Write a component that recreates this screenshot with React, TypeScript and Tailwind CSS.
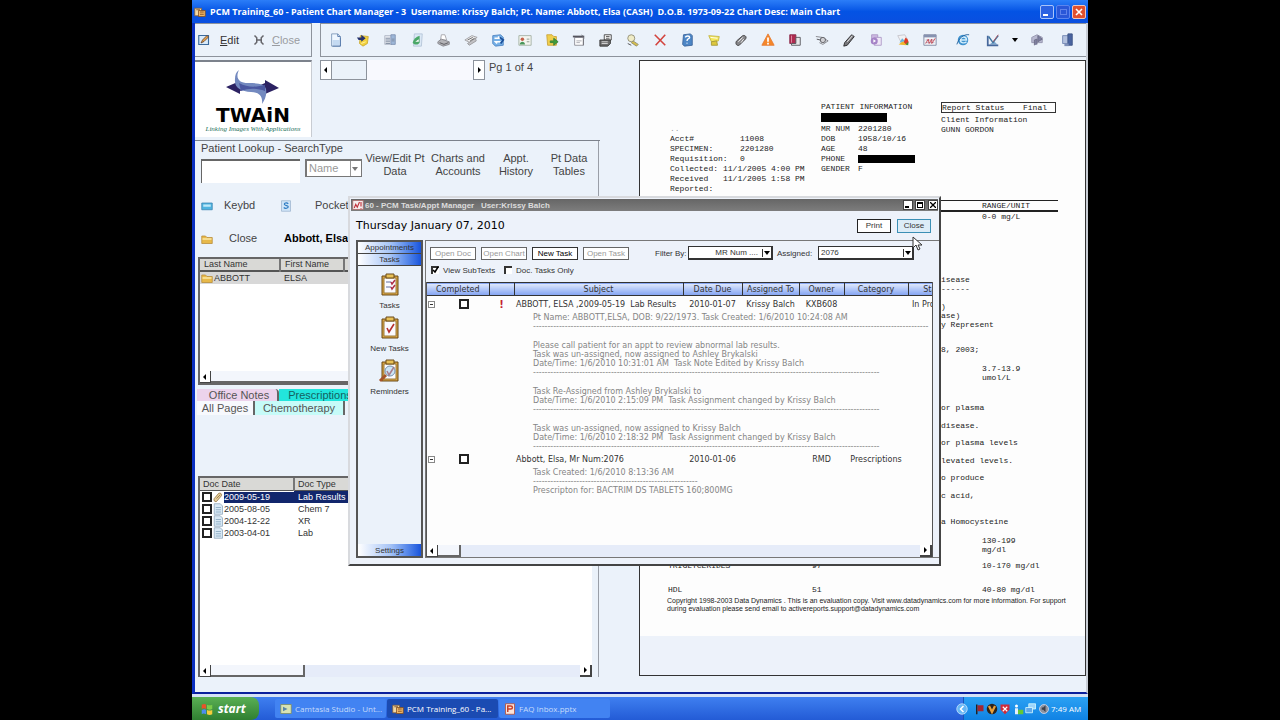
import type { ReactNode } from "react";
import clsx from "clsx";

const sans = "font-['Liberation_Sans',Arial,sans-serif]";
const verdana = "font-['DejaVu_Sans',Verdana,sans-serif]";
const mono = "font-['Liberation_Mono','Courier_New',monospace]";
const tahoma = "font-['Open_Sans',Tahoma,sans-serif]";

function Icon({ children, size = 14 }: { children: ReactNode; size?: number }) {
  return (
    <svg width={size} height={size} viewBox="0 0 16 16" className="shrink-0" aria-hidden="true">
      {children}
    </svg>
  );
}

const toolbar: { name: string; icon: ReactNode }[] = [
  {
    name: "New page",
    icon: (
      <>
        <path d="M3 1h7l3 3v11H3z" fill="#eef6ff" stroke="#7d97b8" />
        <path d="M4 8h8v6H4z" fill="#c4daf2" />
        <path d="M10 1v3h3M13 5v10H4" fill="none" stroke="#4f74a8" />
      </>
    ),
  },
  {
    name: "Send note",
    icon: (
      <>
        <path d="M5 3l9 1-1 8-5 3-4-3z" fill="#f2d13c" stroke="#c9aa34" />
        <path d="M1 5h5V2l5 4-5 4V8H3z" fill="#26326e" />
        <path d="M6 12l5-2" stroke="#fff4b0" />
      </>
    ),
  },
  {
    name: "Scan",
    icon: (
      <>
        <path d="M2 3h8v10H2z" fill="#e4e8ef" stroke="#b0b8c6" />
        <path d="M9 2h5v11H9z" fill="#9db7d8" stroke="#7f92b2" />
        <path d="M3 6h5M3 8h5M3 10h5M3 12h5M10 7h3M10 9h3" stroke="#7d899d" />
      </>
    ),
  },
  {
    name: "Refresh page",
    icon: (
      <>
        <path d="M5 1h9l-1 14H4z" fill="#dbe8f5" stroke="#b5c5d8" />
        <path d="M3 11c1-4 4-7 8-8v8c-2 3-6 3-8 0z" fill="#4aa868" />
        <path d="M6 10l4-3v3z" fill="#fff" />
      </>
    ),
  },
  {
    name: "Print",
    icon: (
      <>
        <path d="M5 2l4 0 2 6H4z" fill="#fff" stroke="#a2a2a8" />
        <path d="M1 10l4-3 9 3v3l-7 2-6-3z" fill="#b4b4b8" stroke="#85858b" />
        <path d="M3 11l5 2 5-2" fill="none" stroke="#525258" />
      </>
    ),
  },
  {
    name: "Print pages",
    icon: (
      <>
        <path d="M1 8l8-5 6 2-8 6z" fill="#ededee" stroke="#9b9b9f" />
        <path d="M4 12l9-6 1 3-8 5z" fill="#c2c2c5" stroke="#98989c" />
        <path d="M4 8l6-3M7 9l5-3" stroke="#666" />
      </>
    ),
  },
  {
    name: "Sync folder",
    icon: (
      <>
        <path d="M2 3l9-1 3 3v9l-9 1-3-3z" fill="#76b0e6" stroke="#4f86c4" />
        <path d="M4 6h6l-2-2M11 10H5l2 2" fill="none" stroke="#fff" strokeWidth="1.6" />
        <path d="M10 5l4 3-3 4" fill="none" stroke="#1a4f9a" strokeWidth="2" />
      </>
    ),
  },
  {
    name: "Patient card",
    icon: (
      <>
        <path d="M1 3h14v11H1z" fill="#f4f5ef" stroke="#a2b0a2" />
        <circle cx="5" cy="7" r="2" fill="#c4604a" />
        <path d="M2 13c0-4 6-4 6 0z" fill="#49965a" />
        <path d="M10 7h3M10 10h3" stroke="#879587" />
      </>
    ),
  },
  {
    name: "Export folder",
    icon: (
      <>
        <path d="M2 2h6l2 2h3v10H3z" fill="#f1cf4c" stroke="#c9a33a" />
        <path d="M6 9h4V6l5 4-5 4v-3H6z" fill="#3f9e3a" stroke="#3b7f38" />
      </>
    ),
  },
  {
    name: "Schedule",
    icon: (
      <>
        <path d="M3 5h10v9H3z" fill="#fff" stroke="#8a8a92" />
        <path d="M1 4h13" stroke="#55555e" strokeWidth="2" />
        <path d="M5 9h6M5 11h4" stroke="#a3a3ab" />
        <path d="M11 2l3 4M13 6v8" stroke="#6c6c74" />
      </>
    ),
  },
  {
    name: "Fax",
    icon: (
      <>
        <path d="M6 2h8v6H6z" fill="#f3f3f3" stroke="#444" />
        <path d="M1 8h12v4l-3 3H1z" fill="#6d6d6d" stroke="#333" />
        <path d="M3 10h7M3 12h7" stroke="#ddd" />
        <path d="M8 4h4M8 6h4" stroke="#555" />
      </>
    ),
  },
  {
    name: "Settings",
    icon: (
      <>
        <circle cx="6" cy="6" r="4" fill="#f0ecc6" stroke="#8f8b72" />
        <path d="M8 9l6 4-2 2-6-4z" fill="#d6bf4b" stroke="#8f8b72" />
        <path d="M2 12l4 2" stroke="#444" />
      </>
    ),
  },
  {
    name: "Delete",
    icon: <path d="M2 2l12 12M14 2L3 14" stroke="#d3443e" strokeWidth="1.8" />,
  },
  {
    name: "Help book",
    icon: (
      <>
        <path d="M4 2l8-1 2 2v11l-9 1-2-2z" fill="#4c86c6" stroke="#3b659c" />
        <path d="M6 5c1-2 5-2 5 0s-3 1-3 4m0 2v1" fill="none" stroke="#fff" strokeWidth="1.6" />
      </>
    ),
  },
  {
    name: "Award",
    icon: (
      <>
        <path d="M2 3l12 1-1 5-8 1z" fill="#f3e75a" stroke="#c4b645" />
        <path d="M5 10l6-1 1 5H5z" fill="#ddc73d" stroke="#a39738" />
        <path d="M4 5l8 1" stroke="#fff" />
      </>
    ),
  },
  {
    name: "Attachment",
    icon: (
      <>
        <path d="M3 9l7-6c3-1 5 2 3 4l-7 7c-3 1-5-2-3-5z" fill="#87878a" stroke="#3a3a3c" />
        <path d="M5 10l5-5M8 11l3-4" stroke="#fff" />
      </>
    ),
  },
  {
    name: "Alert",
    icon: (
      <>
        <path d="M8 1l7 13H1z" fill="#f5872a" stroke="#e67d35" />
        <path d="M8 5v5M8 11v2" stroke="#fff" strokeWidth="2" />
      </>
    ),
  },
  {
    name: "Address book",
    icon: (
      <>
        <path d="M2 2h7v10H2z" fill="#b02b50" stroke="#8a2a48" />
        <path d="M9 5h5v9H4v-2h5z" fill="#e8e8ea" stroke="#55555a" />
        <path d="M4 3v8" stroke="#e292a8" />
      </>
    ),
  },
  {
    name: "View",
    icon: (
      <>
        <path d="M1 4l7 1 7 4-6 4-4-2" fill="none" stroke="#7d7d82" />
        <circle cx="9" cy="8" r="3" fill="#d0d0d4" stroke="#57575c" />
        <path d="M2 7l4 1" stroke="#47474c" />
      </>
    ),
  },
  {
    name: "Sign",
    icon: (
      <>
        <path d="M3 11l8-9 3 2-8 10-4 1z" fill="#77777b" stroke="#262628" />
        <path d="M6 10l6-7" stroke="#fff" />
      </>
    ),
  },
  {
    name: "Copy pages",
    icon: (
      <>
        <path d="M3 2h7v9H3z" fill="#cdb9e2" stroke="#ab97c6" />
        <path d="M6 5h8v9H6z" fill="#efe7f7" stroke="#ab97c6" />
        <circle cx="6" cy="9" r="4" fill="#a583c7" />
        <path d="M5 7l3 2-3 2z" fill="#fff" />
      </>
    ),
  },
  {
    name: "Image tools",
    icon: (
      <>
        <path d="M2 3l8-1 3 5-6 6z" fill="#f1f1f3" stroke="#c3c3ca" />
        <path d="M11 5a6 6 0 012 9l-5-3z" fill="#db3b27" />
        <path d="M3 13l5-4 4 5z" fill="#f0b62b" />
        <path d="M4 11l3-5 3 3z" fill="#66b3dc" />
        <path d="M11 13l3-3v4z" fill="#3b9a40" />
      </>
    ),
  },
  {
    name: "Calendar",
    icon: (
      <>
        <path d="M1 2h14v12H1z" fill="#f5f5f8" stroke="#7c86a0" />
        <path d="M1 2h14v3H1z" fill="#8692b0" />
        <path d="M3 8h10M3 11h10" stroke="#a9afc2" />
        <path d="M3 12l3-5 1 5 3-5v5l4-6" fill="none" stroke="#c64350" />
      </>
    ),
  },
];

const toolbarEnd: { name: string; icon: ReactNode }[] = [
  {
    name: "Browser",
    icon: (
      <>
        <circle cx="8" cy="8" r="6" fill="#3f93cf" />
        <path d="M5 8h7c0-4-6-5-7 0 0 4 5 4 7 2" fill="none" stroke="#d4eefc" strokeWidth="1.6" />
        <path d="M1 13C3 6 9 1 15 2" fill="none" stroke="#1c5a98" />
      </>
    ),
  },
  {
    name: "Chart",
    icon: (
      <>
        <path d="M4 13h9l-4-4z" fill="#7fa9cf" />
        <path d="M2 3v11h12" fill="none" stroke="#46689c" strokeWidth="2" />
        <path d="M3 4l5 7 6-8" fill="none" stroke="#3e76a0" strokeWidth="1.6" />
        <path d="M8 10l6-8" stroke="#b34c53" />
      </>
    ),
  },
];

const subTextOne = [
  "Pt Name: ABBOTT,ELSA, DOB: 9/22/1973. Task Created: 1/6/2010 10:24:08 AM",
  "-".repeat(137),
  "",
  "Please call patient for an appt to review abnormal lab results.",
  "Task was un-assigned, now assigned to Ashley Brykalski",
  "Date/Time: 1/6/2010 10:31:01 AM  Task Note Edited by Krissy Balch",
  "-".repeat(120),
  "",
  "Task Re-Assigned from Ashley Brykalski to",
  "Date/Time: 1/6/2010 2:15:09 PM  Task Assignment changed by Krissy Balch",
  "-".repeat(120),
  "",
  "Task was un-assigned, now assigned to Krissy Balch",
  "Date/Time: 1/6/2010 2:18:32 PM  Task Assignment changed by Krissy Balch",
  "-".repeat(120),
];

const subTextTwo = [
  "Task Created: 1/6/2010 8:13:36 AM",
  "-".repeat(57),
  "Prescripton for: BACTRIM DS TABLETS 160;800MG",
];

const docs = [
  { date: "2009-05-19", type: "Lab Results", selected: true },
  { date: "2005-08-05", type: "Chem 7", selected: false },
  { date: "2004-12-22", type: "XR", selected: false },
  { date: "2003-04-01", type: "Lab", selected: false },
];

interface ReportLine {
  gap: string;
  prose?: string;
  name?: string;
  value?: string;
  range?: string;
}

const reportLines: ReportLine[] = [
  { gap: "pt-0", range: "0-0 mg/L" },
  { gap: "pt-[54px]", prose: "isease" },
  { gap: "pt-0", prose: "------" },
  { gap: "pt-[9px]", prose: ")" },
  { gap: "pt-0", prose: "ase)" },
  { gap: "pt-0", prose: "y Represent" },
  { gap: "pt-[16px]", prose: "8, 2003;" },
  { gap: "pt-[10px]", range: "3.7-13.9" },
  { gap: "pt-0", range: "umol/L" },
  { gap: "pt-[21px]", prose: "or plasma" },
  { gap: "pt-[9px]", prose: "disease." },
  { gap: "pt-[8px]", prose: "or plasma levels" },
  { gap: "pt-[9px]", prose: "levated levels." },
  { gap: "pt-[8px]", prose: "o produce" },
  { gap: "pt-[9px]", prose: "c acid," },
  { gap: "pt-[17px]", prose: "a Homocysteine" },
  { gap: "pt-[10px]", range: "130-199" },
  { gap: "pt-0", range: "mg/dl" },
  { gap: "pt-[7px]", name: "TRIGLYCERIDES", value: "97", range: "10-170 mg/dl" },
  { gap: "pt-[15px]", name: "HDL", value: "51", range: "40-80 mg/dl" },
];

function Arrow({ dir }: { dir: "left" | "right" | "down" }) {
  const d = { left: "M5 1v6L2 4z", right: "M3 1v6l3-3z", down: "M1 2h6L4 6z" }[dir];
  return (
    <svg width="8" height="8" viewBox="0 0 8 8" className="shrink-0" aria-hidden="true">
      <path d={d} fill="currentColor" />
    </svg>
  );
}

function HScroll({ thumb, className }: { thumb: string; className?: string }) {
  return (
    <div className={clsx("flex h-[12px] bg-[#e6ecf9] text-black", className)}>
      <button aria-label="Scroll left" className="flex w-[11px] items-center justify-center border-r border-b border-[#444] bg-white">
        <Arrow dir="left" />
      </button>
      <div className={clsx("border-r-2 border-b-2 border-[#666] bg-[#f3f6fc]", thumb)} />
      <div className="flex-1" />
      <button aria-label="Scroll right" className="flex w-[12px] items-center justify-center border-r-2 border-b-2 border-[#444] bg-white">
        <Arrow dir="right" />
      </button>
    </div>
  );
}

function ToolButton({ name, icon, wide }: { name: string; icon: ReactNode; wide?: boolean }) {
  return (
    <button aria-label={name} className={clsx("flex justify-center", wide ? "w-[30px]" : "w-[27px]")}>
      <Icon>{icon}</Icon>
    </button>
  );
}

function TitleBar() {
  return (
    <header className="flex h-[23px] items-center gap-1 bg-gradient-to-b from-[#2b7df8] via-[#0453e4] to-[#0a4fe0] pl-[2px] pr-[2px] text-white">
      <Icon size={12}>
        <path d="M1 3h9v10H1z" fill="#f2d9a4" stroke="#8a5d2c" />
        <path d="M6 6h9v8H6z" fill="#efb665" stroke="#7c4a1c" />
        <path d="M8 8h5M8 11h5M3 5h5" stroke="#6d3b17" />
      </Icon>
      <h1 className={clsx(tahoma, "flex-1 truncate whitespace-pre text-[9px] leading-[14px] font-bold")}>
        PCM Training_60 - Patient Chart Manager - 3  Username: Krissy Balch; Pt. Name: Abbott, Elsa (CASH)  D.O.B. 1973-09-22 Chart Desc: Main Chart
      </h1>
      <div className="flex gap-[2px]">
        <button aria-label="Minimize" className="flex h-[14px] w-[14px] items-end rounded-xs border border-[#a9c4fa] bg-[#2b62e2] p-[2px]">
          <span className="h-[2px] w-[5px] bg-white" />
        </button>
        <button aria-label="Restore" className="flex h-[14px] w-[14px] items-center justify-center rounded-xs border border-[#5b84ee] bg-[#2a57d8]">
          <span className="h-[6px] w-[7px] border border-[#5f82ea]" />
        </button>
        <button aria-label="Close window" className="flex h-[14px] w-[14px] items-center justify-center rounded-xs border border-[#f1c4b8] bg-[#e0502e]">
          <svg width="8" height="8" viewBox="0 0 8 8">
            <path d="M1 1l6 6M7 1L1 7" stroke="#fff" strokeWidth="1.6" />
          </svg>
        </button>
      </div>
    </header>
  );
}

function Toolbars() {
  return (
    <div className="flex gap-2">
      <div className="flex h-[34px] w-[117px] shrink-0 items-center border border-l-0 border-[#8d939c] pl-[3px] text-[11px]">
        <button className="flex items-center gap-[10px] text-[#333]">
          <Icon size={12}>
            <path d="M1 2h13v12H1z" fill="#d9ebfb" stroke="#3d6b9c" strokeWidth="1.5" />
            <path d="M4 12l2-4 6-6 2 2-6 6z" fill="#e9a24b" stroke="#56382a" />
          </Icon>
          <span>
            <u>E</u>dit
          </span>
        </button>
        <button className="ml-[14px] flex items-center gap-[7px] text-[#9a9ca1]">
          <Icon size={12}>
            <path d="M2 2l3 3v6l-3 3M14 2l-3 3v6l3 3M5 8h6" fill="none" stroke="#66666b" strokeWidth="2" />
          </Icon>
          <span>
            <u>C</u>lose
          </span>
        </button>
      </div>
      <div className="flex h-[34px] min-w-0 flex-1 items-center border border-r-0 border-[#8d939c] pl-[1px] text-black">
        {toolbar.map((t) => (
          <ToolButton key={t.name} {...t} />
        ))}
        <div className="ml-[5px] flex items-center">
          {toolbarEnd.map((t) => (
            <ToolButton key={t.name} {...t} wide />
          ))}
          <button aria-label="More" className="flex w-[14px] justify-center">
            <Arrow dir="down" />
          </button>
          <ToolButton
            name="Send"
            wide
            icon={
              <>
                <path d="M2 5l6-3 6 3v6H2z" fill="#b8b9d0" stroke="#9394ab" />
                <path d="M5 14V8l3-1v6M9 3l5 4-5 3z" fill="#7f80a0" stroke="#6c6d86" />
              </>
            }
          />
          <ToolButton
            name="Exit"
            wide
            icon={
              <>
                <path d="M3 3h7v9H3z" fill="#b3c1de" stroke="#7186b2" />
                <path d="M9 1h5v13H9z" fill="#4a64a0" stroke="#3b5285" />
                <path d="M5 12h5v3H5z" fill="#7d8fb8" />
              </>
            }
          />
        </div>
      </div>
    </div>
  );
}

function Logo() {
  return (
    <div className="flex h-[77px] w-[117px] shrink-0 flex-col items-center border-t-2 border-r border-[#7c828c] border-r-[#c8ccd2] bg-white pt-2">
      <svg width="56" height="35" viewBox="0 0 56 35" className="shrink-0" aria-hidden="true">
        <path d="M1 17l14-6v3c9 4 17 3 25-1v-3l14 8-14 6v-4c-9-3-16-3-25 1v3z" fill="#2c2262" />
        <path d="M14 0c-4 8 0 13 9 13 10 0 17 1 18 6 1 6-1 11-4 15 1-8-3-12-11-12-10-1-17-4-16-13 0-4 1-7 4-9z" fill="#7389bf" />
        <path d="M14 13c9 5 18 4 26 2v6c-9-3-16-3-24 0z" fill="#4a57a0" />
      </svg>
      <p className={clsx(verdana, "text-[20px] leading-[20px] font-bold text-black")}>TWAiN</p>
      <p className="font-['Liberation_Serif',serif] text-[7px] leading-[8px] italic text-[#24705c]">
        Linking Images With Applications
      </p>
    </div>
  );
}

function PatientLookup() {
  return (
    <div className="flex h-[54px] pl-[6px] text-[11px] leading-[13px] text-[#444]">
      <div>
        <label htmlFor="lookup" className="block pt-[1px]">
          Patient Lookup - SearchType
        </label>
        <div className="mt-1 flex gap-[5px]">
          <input id="lookup" className="h-[24px] w-[99px] border-t-2 border-l border-[#666] bg-white px-1" />
          <div className="flex h-[18px] w-[57px] items-center border-2 border-r border-b border-[#777] bg-white">
            <select aria-label="Search type" className="h-full min-w-0 flex-1 appearance-none bg-white pl-[2px] text-[#999] outline-none">
              <option>Name</option>
            </select>
            <span className="flex h-full w-[11px] items-center border-l border-[#999] text-[#777]">
              <Arrow dir="down" />
            </span>
          </div>
        </div>
      </div>
      <div className="flex items-start pt-[11px] text-center">
        <button className="w-[66px]">View/Edit Pt Data</button>
        <button className="w-[60px]">Charts and Accounts</button>
        <button className="w-[56px] px-2">Appt. History</button>
        <button className="w-[50px]">Pt Data Tables</button>
      </div>
    </div>
  );
}

function FolderIcon() {
  return (
    <Icon size={12}>
      <path d="M1 4h5l2 2h7v8H1z" fill="#e7b94a" stroke="#b58a36" />
      <path d="M2 7h12v2H2z" fill="#fbe9a6" />
    </Icon>
  );
}

function LeftPane() {
  return (
    <section className="flex w-[405px] shrink-0 flex-col">
      <div className="flex gap-2">
        <Logo />
        <div className="flex h-[20px] w-[165px] text-black">
          <button aria-label="Previous page" className="flex w-[12px] items-center justify-center border border-[#8d939c] bg-white">
            <Arrow dir="left" />
          </button>
          <div className="w-[35px] border border-l-0 border-[#8d939c] bg-[#ebf2fa]" />
          <div className="flex-1 bg-[#f8f9fe]" />
          <button aria-label="Next page" className="flex w-[12px] items-center justify-center border border-[#8d939c] bg-white">
            <Arrow dir="right" />
          </button>
        </div>
        <p className="-ml-1 pt-[1px] text-[11px] leading-[13px] text-[#444]">Pg 1 of 4</p>
      </div>

      <div className="mt-[3px] mb-[15px] flex flex-1 flex-col border-t border-[#7c828c]">
        <div className="flex w-[404px] flex-1 flex-col border-r border-[#9a9fa8]">
          <PatientLookup />
          <div className="grid grid-cols-[23px_56px_35px_1fr] items-center pt-1 pl-[6px] text-[11px] leading-[13px] text-[#444]">
            <Icon size={12}>
              <path d="M1 4h14v9H1z" fill="#4fb4e0" stroke="#3a80ad" />
              <path d="M3 6h10v3H3z" fill="#bfe8f8" />
            </Icon>
            <button className="text-left">Keybd</button>
            <Icon size={12}>
              <path d="M2 1h12v14H2z" fill="#cfe5f8" stroke="#9cb4ce" />
              <path d="M11 5c-2-2-6-1-5 1s5 1 5 3-4 3-6 1" fill="none" stroke="#2b7ac2" strokeWidth="1.5" />
            </Icon>
            <button className="text-left">Pocket</button>
          </div>
          <div className="flex items-center pt-[20px] pb-3 pl-[6px] text-[11px] leading-[13px] text-[#444]">
            <FolderIcon />
            <button className="ml-4 w-[55px] text-left">Close</button>
            <strong className="text-black">Abbott, Elsa</strong>
          </div>

          <div className="mx-[3px] flex h-[128px] flex-col border-2 border-r border-[#666] bg-white text-[9px] leading-[11px] text-[#333]">
            <table className="w-full table-fixed border-collapse">
              <thead>
                <tr className="border-b-2 border-[#555] bg-[#d9d9d6] text-left">
                  <th className="w-[80px] border-r-2 border-[#777] py-0 pl-1 font-normal">Last Name</th>
                  <th className="w-[64px] border-r-2 border-[#777] py-0 pl-1 font-normal">First Name</th>
                  <th />
                </tr>
              </thead>
              <tbody>
                <tr className="bg-[#d8d8d8]">
                  <td className="p-0">
                    <div className="flex items-center gap-[1px] pl-[1px]">
                      <FolderIcon />
                      ABBOTT
                    </div>
                  </td>
                  <td className="p-0 pl-1">ELSA</td>
                  <td />
                </tr>
              </tbody>
            </table>
            <div className="flex-1" />
            <HScroll thumb="w-[200px]" />
          </div>

          <div className="mt-1 pl-[2px] text-[11px] leading-[13px] text-[#555]">
            <div className="flex h-[12px] items-start overflow-hidden">
              <button className="h-full w-[82px] rounded-tr-sm border-r-2 border-[#666] bg-[#ecd3ec] pl-1">Office Notes</button>
              <button className="h-full w-[82px] bg-[#22e5dc] text-[#14615f]">Prescriptions</button>
            </div>
            <div className="flex h-[14px]">
              <button className="w-[58px] border-r-2 border-[#666] bg-[#f7f9fd]">All Pages</button>
              <button className="w-[90px] border-r-2 border-[#666] bg-[#c6fbf8]">Chemotherapy</button>
            </div>
          </div>

          <div className="mt-[61px] mr-[6px] ml-[3px] flex flex-1 flex-col border-t-2 border-l-2 border-[#666] bg-white text-[9px] leading-[11px] text-[#333]">
            <table className="w-full table-fixed border-collapse">
              <thead>
                <tr className="border-b border-[#555] bg-[#d9d9d6] text-left">
                  <th className="w-[94px] border-r-2 border-[#777] pt-[1px] pb-0 pl-[3px] font-normal">Doc Date</th>
                  <th className="pt-[1px] pb-0 pl-[3px] font-normal">Doc Type</th>
                </tr>
              </thead>
              <tbody>
                {docs.map((d) => (
                  <tr key={d.date} className="h-[12px]">
                    <td className="p-0">
                      <label className="flex items-center">
                        <input type="checkbox" className="ml-[2px] h-[10px] w-[10px] appearance-none border-2 border-[#222] bg-white" />
                        <Icon size={12}>
                          {d.selected ? (
                            <path d="M3 10l6-7c3-1 5 2 3 4l-6 7c-3 1-4-2-3-4zm3 0l5-5" fill="#e6cf9c" stroke="#8c6a35" />
                          ) : (
                            <>
                              <path d="M3 1h8l3 3v11H3z" fill="#d9e9f5" stroke="#8ba3b8" />
                              <path d="M5 6h7M5 9h7M5 12h7" stroke="#7fa0ba" />
                            </>
                          )}
                        </Icon>
                        <span className={clsx("flex-1", d.selected && "bg-[#11266c] text-white")}>{d.date}</span>
                      </label>
                    </td>
                    <td className={clsx("p-0 pl-1", d.selected && "bg-[#11266c] text-white")}>{d.type}</td>
                  </tr>
                ))}
              </tbody>
            </table>
            <div className="flex-1" />
            <HScroll thumb="w-[94px]" />
          </div>
        </div>
      </div>
    </section>
  );
}

function Report() {
  return (
    <section className={clsx(mono, "mb-4 ml-auto min-w-0 max-w-[447px] flex-1 border border-[#333] bg-[#edf2fa] text-[8px] leading-[10px] text-[#222]")}>
      <div className="h-[575px] bg-[#fdfdfd]">
        <div className="grid grid-cols-[151px_120px_1fr] pt-[41px] pl-[30px] whitespace-pre">
          <div className="grid grid-cols-[70px_1fr] content-start pt-[22px]">
            <span className="text-[#999]">..</span>
            <span />
            <span>Acct#</span>
            <span>11008</span>
            <span>SPECIMEN:</span>
            <span>2201280</span>
            <span>Requisition:</span>
            <span>0</span>
            <span className="col-span-2 grid grid-cols-[53px_1fr]">
              <span>Collected:</span>
              <span>11/1/2005 4:00 PM</span>
              <span>Received</span>
              <span>11/1/2005 1:58 PM</span>
              <span>Reported:</span>
            </span>
          </div>
          <div>
            <p>PATIENT INFORMATION</p>
            <div className="mt-[1px] mb-[2px] h-[9px] w-[66px] bg-black" />
            <dl className="grid grid-cols-[37px_1fr]">
              <dt>MR NUM</dt>
              <dd>2201280</dd>
              <dt>DOB</dt>
              <dd>1958/10/16</dd>
              <dt>AGE</dt>
              <dd>48</dd>
              <dt>PHONE</dt>
              <dd className="mt-[1px] h-[8px] w-[57px] bg-black" />
              <dt>GENDER</dt>
              <dd>F</dd>
            </dl>
          </div>
          <div>
            <p className="flex w-[115px] justify-between border border-[#333] pr-2 leading-[9px]">
              <span>Report Status</span>
              <span>Final</span>
            </p>
            <p className="mt-[1px] pt-[1px]">Client Information</p>
            <p>GUNN GORDON</p>
          </div>
        </div>

        <table className="mt-[6px] ml-[28px] w-[390px] table-fixed border-collapse leading-[9px]">
          <thead>
            <tr className="border-t border-b-2 border-[#222] text-left">
              <th className="w-[144px] p-0" />
              <th className="w-[170px] p-0" />
              <th className="p-0 font-normal">RANGE/UNIT</th>
            </tr>
          </thead>
          <tbody>
            {reportLines.map((l, i) =>
              l.prose ? (
                <tr key={i}>
                  <td colSpan={3} className={clsx("p-0 pl-[273px] whitespace-pre", l.gap)}>
                    {l.prose}
                  </td>
                </tr>
              ) : (
                <tr key={i}>
                  <td className={clsx("p-0", l.gap)}>{l.name}</td>
                  <td className={clsx("p-0", l.gap)}>{l.value}</td>
                  <td className={clsx("p-0", l.gap)}>{l.range}</td>
                </tr>
              )
            )}
          </tbody>
        </table>
        <p className={clsx(sans, "pt-[3px] pl-[27px] text-[7px] leading-[8px] whitespace-nowrap")}>
          Copyright 1998-2003 Data Dynamics . This is an evaluation copy. Visit www.datadynamics.com for more information. For support
          <br />
          during evaluation please send email to activereports.support@datadynamics.com
        </p>
      </div>
    </section>
  );
}

function Clipboard({ lens, list }: { lens?: boolean; list?: boolean }) {
  return (
    <svg width="24" height="24" viewBox="0 0 24 24" aria-hidden="true">
      <path d="M4 3h16v19H4z" fill="#d9a441" stroke="#6b4a19" />
      <path d="M6 5h12v15H6z" fill="#fbfbff" stroke="#9a7a3c" />
      <path d="M8 1h8v4H8z" fill="#e8c158" stroke="#6b4a19" />
      {list ? (
        <>
          <path d="M8 9h5M8 14h5" stroke="#6370a0" />
          <path d="M13 9l1 2 3-4M13 14l1 2 3-4" fill="none" stroke="#b03048" strokeWidth="1.5" />
        </>
      ) : (
        <path d="M9 12l2 4 5-8" fill="none" stroke="#b5302f" strokeWidth="1.6" />
      )}
      {lens && (
        <>
          <circle cx="12" cy="12" r="5" fill="#9fd0ee" fillOpacity="0.5" stroke="#7792ad" />
          <path d="M8 16l-6 6" stroke="#a5552b" strokeWidth="3" />
        </>
      )}
    </svg>
  );
}

function NavItem({ label, children }: { label: string; children: ReactNode }) {
  return (
    <button className="flex h-[43px] flex-col items-center gap-[3px]">
      {children}
      <span>{label}</span>
    </button>
  );
}

const navBar = "h-[12px] bg-gradient-to-r from-white via-[#a9c6f6] to-[#1853dc]";

function Expander() {
  return (
    <button aria-label="Collapse" className="flex h-[7px] w-[7px] items-center justify-center border border-[#888] bg-white">
      <span className="h-px w-[3px] bg-[#333]" />
    </button>
  );
}

function SubText({ lines }: { lines: string[] }) {
  return (
    <tr className="text-[#858585]">
      <td colSpan={2} />
      <td colSpan={6} className="p-0 pl-[19px] leading-[9px] whitespace-pre">
        {lines.map((l, i) => (
          <div key={i} className={l ? "h-[9px]" : "h-[10px]"}>
            {l}
          </div>
        ))}
      </td>
    </tr>
  );
}

function TaskRow(props: { subject: string; due: string; assigned?: string; owner: string; category?: string; status?: string; urgent?: boolean }) {
  return (
    <tr className="h-[17px] text-[#333]">
      <td className="p-0 pl-[1px]">
        <div className="flex items-center gap-[24px]">
          <Expander />
          <input type="checkbox" aria-label={props.subject} className="h-[10px] w-[10px] appearance-none border-2 border-[#222] bg-white" />
        </div>
      </td>
      <td className="p-0 text-center text-[10px] font-bold text-[#c3202f]">{props.urgent && "!"}</td>
      <td className="p-0 pl-[2px] whitespace-pre">{props.subject}</td>
      <td className="p-0 text-center">{props.due}</td>
      <td className="p-0 text-center">{props.assigned}</td>
      <td className="p-0 text-center">{props.owner}</td>
      <td className="p-0 text-center">{props.category}</td>
      <td className="overflow-hidden p-0 pl-1 whitespace-nowrap">{props.status}</td>
    </tr>
  );
}

const dialogButton = "h-[13px] w-[46px] border bg-white text-center leading-[11px]";

function TaskManager() {
  const th = "border-r border-[#333] p-0 text-center font-normal";
  return (
    <section className="absolute top-[196px] left-[156px] flex h-[370px] w-[593px] flex-col border-2 border-[#d8dade] border-r-[#444] border-b-[#444] bg-[#edf2fa] text-[8px] leading-[11px] text-[#333]">
      <header className="mx-[1px] mt-[1px] flex h-[12px] items-center gap-[1px] bg-gradient-to-b from-[#666] to-[#7d7d7d] pl-[1px]">
        <Icon size={12}>
          <path d="M1 2h14v12H1z" fill="#f6eded" stroke="#a66" />
          <path d="M3 12l2-5 2 4 3-7M12 4v6M12 12v1" fill="none" stroke="#c0303a" strokeWidth="1.5" />
        </Icon>
        <h2 className="flex-1 whitespace-pre font-bold text-[#dcdcdc]">
          60 - PCM Task/Appt Manager   User:Krissy Balch
        </h2>
        <button aria-label="Minimize dialog" className="flex h-[10px] w-[10px] items-end border border-[#444] bg-white p-px">
          <span className="h-[2px] w-1 bg-black" />
        </button>
        <button aria-label="Maximize dialog" className="ml-[1px] flex h-[10px] w-[10px] items-center justify-center border border-[#444] bg-white">
          <span className="h-[6px] w-[6px] border border-t-2 border-black" />
        </button>
        <button aria-label="Close dialog" className="ml-[2px] flex h-[10px] w-[10px] items-center justify-center border border-[#444] bg-white">
          <svg width="6" height="6" viewBox="0 0 6 6">
            <path d="M0 0l6 6M6 0L0 6" stroke="#000" strokeWidth="1.3" />
          </svg>
        </button>
      </header>

      <div className="flex h-[29px] items-center pr-2 pl-[6px]">
        <p className={clsx(verdana, "flex-1 text-[11px] leading-[14px] text-black")}>Thursday January 07, 2010</p>
        <button className="mr-[6px] h-[14px] w-[34px] border border-[#222] bg-white leading-[12px]">Print</button>
        <button className="h-[14px] w-[34px] border border-[#3b8fb5] bg-[#dcecf7] leading-[12px]">Close</button>
      </div>

      <div className="mb-[6px] ml-[6px] flex min-h-0 flex-1 gap-[2px]">
        <nav className="flex w-[67px] shrink-0 flex-col border-2 border-[#555] bg-[#ebf2fa]">
          <button className={clsx(navBar, "border-b border-[#444]")}>Appointments</button>
          <button className={clsx(navBar, "border-b border-[#444]")}>Tasks</button>
          <div className="flex flex-1 flex-col pt-[7px]">
            <NavItem label="Tasks">
              <Clipboard list />
            </NavItem>
            <NavItem label="New Tasks">
              <Clipboard />
            </NavItem>
            <NavItem label="Reminders">
              <Clipboard lens />
            </NavItem>
          </div>
          <button className={navBar}>Settings</button>
        </nav>

        <div className="flex min-w-0 flex-1 flex-col border-t border-b border-l border-[#777]">
          <div className="flex items-center pt-[5px] pl-1">
            <div className="flex gap-[5px] text-[#999]">
              <button className={clsx(dialogButton, "border-[#666]")}>Open Doc</button>
              <button className={clsx(dialogButton, "border-[#666]")}>Open Chart</button>
              <button className={clsx(dialogButton, "border-[#333] text-black")}>New Task</button>
              <button className={clsx(dialogButton, "border-[#666]")}>Open Task</button>
            </div>
            <label htmlFor="filter" className="ml-[26px] w-[33px]">
              Filter By:
            </label>
            <div className="flex h-[14px] w-[85px] items-center border border-r-2 border-b-2 border-[#333] bg-white">
              <select id="filter" className="min-w-0 flex-1 appearance-none bg-white pr-1 text-right outline-none">
                <option>MR Num ....</option>
              </select>
              <span className="border-l border-[#333] text-black">
                <Arrow dir="down" />
              </span>
            </div>
            <label htmlFor="assigned" className="ml-1 w-[41px]">
              Assigned:
            </label>
            <div className="flex h-[14px] w-[96px] items-center border border-r-2 border-b-2 border-[#333] bg-white">
              <select id="assigned" className="min-w-0 flex-1 appearance-none bg-white pl-[2px] outline-none">
                <option>2076</option>
              </select>
              <span className="border-l border-[#333] text-black">
                <Arrow dir="down" />
              </span>
            </div>
          </div>

          <div className="mb-[2px] flex h-5 items-center pl-[5px]">
            <label className="flex w-[73px] items-center gap-1">
              <span className="grid">
                <input type="checkbox" defaultChecked className="col-start-1 row-start-1 h-2 w-2 appearance-none border-t-2 border-l-2 border-[#333] bg-white" />
                <svg width="8" height="8" viewBox="0 0 8 8" className="pointer-events-none col-start-1 row-start-1">
                  <path d="M2 4l2 2 3-5" fill="none" stroke="#000" strokeWidth="1.5" />
                </svg>
              </span>
              View SubTexts
            </label>
            <label className="flex items-center gap-1">
              <input type="checkbox" className="h-2 w-2 appearance-none border-t-2 border-l-2 border-[#333] bg-white" />
              Doc. Tasks Only
            </label>
          </div>

          <div className={clsx(verdana, "mr-[6px] flex min-h-0 flex-1 flex-col border-r border-l border-[#555] bg-[#fdfdfd]")}>
            <div className="min-h-0 flex-1 overflow-hidden">
              <table className="w-[537px] table-fixed border-collapse">
                <thead>
                  <tr className="h-[13px] border-t border-b border-[#333] bg-gradient-to-b from-[#dfe8fc] to-[#86a5f2]">
                    <th className={clsx(th, "w-[62px]")}>Completed</th>
                    <th className={clsx(th, "w-[25px]")} />
                    <th className={clsx(th, "w-[169px]")}>Subject</th>
                    <th className={clsx(th, "w-[59px]")}>Date Due</th>
                    <th className={clsx(th, "w-[57px]")}>Assigned To</th>
                    <th className={clsx(th, "w-[45px]")}>Owner</th>
                    <th className={clsx(th, "w-[64px]")}>Category</th>
                    <th className={clsx(th, "w-[56px]")}>Status</th>
                  </tr>
                </thead>
                <tbody>
                  <TaskRow
                    subject="ABBOTT, ELSA ,2009-05-19  Lab Results"
                    due="2010-01-07"
                    assigned="Krissy Balch"
                    owner="KXB608"
                    status="In Progress"
                    urgent
                  />
                  <SubText lines={subTextOne} />
                  <TaskRow subject="Abbott, Elsa, Mr Num:2076" due="2010-01-06" owner="RMD" category="Prescriptions" />
                  <SubText lines={subTextTwo} />
                </tbody>
              </table>
            </div>
            <HScroll thumb="w-[23px]" />
          </div>
        </div>
      </div>
    </section>
  );
}

function Taskbar() {
  return (
    <footer className={clsx(tahoma, "flex h-[23px] items-stretch bg-gradient-to-b from-[#3f7ff0] to-[#235bd6] text-[8px] whitespace-nowrap text-white")}>
      <button className="flex w-[67px] items-center gap-1 rounded-r-lg bg-gradient-to-b from-[#5ab054] to-[#2f7f31] pl-2">
        <Icon>
          <path d="M2 3c2-1 4-1 5 0v5c-2-1-4-1-5 0z" fill="#e8532a" />
          <path d="M8 3c2 1 4 1 6 0v5c-2 1-4 1-6 0z" fill="#7ccb4a" />
          <path d="M2 9c2-1 4-1 5 0v5c-2-1-4-1-5 0z" fill="#4c8df0" />
          <path d="M8 9c2 1 4 1 6 0v5c-2 1-4 1-6 0z" fill="#f5cd3b" />
        </Icon>
        <span className="text-[12px] font-bold italic">start</span>
      </button>
      <div className="ml-4 flex py-[2px]">
        <button className="flex w-[111px] items-center gap-[3px] rounded-xs bg-[#4283f2] pl-[5px] text-[#c6dbfb]">
          <Icon size={12}>
            <path d="M1 2h14v12H1z" fill="#d8e3b4" stroke="#7e8b5b" />
            <path d="M4 5l6 3-6 3z" fill="#5b86a6" />
          </Icon>
          Camtasia Studio - Unt...
        </button>
        <button className="ml-[1px] flex w-[111px] items-center gap-[3px] rounded-xs bg-[#1b4bb2] pl-[5px]">
          <Icon size={12}>
            <path d="M1 3h9v10H1z" fill="#f2d9a4" stroke="#8a5d2c" />
            <path d="M6 6h9v8H6z" fill="#efb665" stroke="#7c4a1c" />
            <path d="M8 8h5M8 11h5M3 5h5" stroke="#6d3b17" />
          </Icon>
          PCM Training_60 - Pa...
        </button>
        <button className="ml-[1px] flex w-[111px] items-center gap-[3px] rounded-xs bg-[#4283f2] pl-[5px] text-[#c6dbfb]">
          <Icon size={12}>
            <path d="M2 1h12v14H2z" fill="#fbe3d8" stroke="#b74a2b" />
            <path d="M5 12V4h4c3 0 3 4 0 4H5" fill="none" stroke="#c8402a" strokeWidth="2" />
          </Icon>
          FAQ Inbox.pptx
        </button>
      </div>
      <div className="ml-auto flex w-[125px] items-center gap-[1px] border-l border-[#1b54b8] bg-gradient-to-b from-[#2ba1f3] to-[#0f82e4]">
        <button aria-label="Show hidden icons" className="-ml-2 pr-1">
          <Icon size={12}>
            <circle cx="8" cy="8" r="7" fill="#66b7f6" stroke="#cfe8fd" />
            <path d="M10 4L6 8l4 4" fill="none" stroke="#fff" strokeWidth="2" />
          </Icon>
        </button>
        <Icon size={12}>
          <path d="M5 2v13" stroke="#222" strokeWidth="2" />
          <path d="M6 3h8v8H6z" fill="#a32631" />
        </Icon>
        <Icon size={12}>
          <circle cx="8" cy="8" r="7" fill="#2b241e" />
          <path d="M4 4l4 8 4-8" fill="none" stroke="#e9a13a" strokeWidth="3" />
        </Icon>
        <Icon size={12}>
          <path d="M2 2h12v7l-6 6-6-6z" fill="#cf2b3a" />
          <path d="M5 5l6 6M11 5l-6 6" stroke="#fff" strokeWidth="1.5" />
        </Icon>
        <Icon size={12}>
          <circle cx="6" cy="4" r="2" fill="#fff" />
          <path d="M4 7h4v8H4z" fill="#e3eefc" />
          <path d="M8 9h7v6H8z" fill="#64c735" />
        </Icon>
        <Icon size={12}>
          <path d="M5 1h9v7H5z" fill="#9bd3fa" stroke="#dff" />
          <path d="M1 6h9v7H1z" fill="#5fa7ea" stroke="#dff" />
        </Icon>
        <Icon size={12}>
          <circle cx="8" cy="8" r="6" fill="#8c93a0" stroke="#dde" />
          <path d="M5 6h2l3-3v9L7 9H5z" fill="#3a3f4a" />
        </Icon>
        <span className="flex-1 pr-2 text-right">7:49 AM</span>
      </div>
    </footer>
  );
}

export default function App() {
  return (
    <div className={clsx(sans, "flex min-h-screen justify-center bg-black")}>
      <main className="relative flex w-[70%] flex-col bg-[#ebf2fa]">
        <TitleBar />
        <div className="flex flex-1 flex-col border-r-2 border-b-2 border-l-[3px] border-[#0a2fc0] border-r-[#c9ced6] border-b-[#0a1f9c]">
          <Toolbars />
          <div className="mt-[3px] flex flex-1">
            <LeftPane />
            <Report />
          </div>
        </div>
        <div className="h-[3px] bg-[#d5e2f5]" />
        <Taskbar />
        <TaskManager />
        <svg width="10" height="15" viewBox="0 0 10 15" className="pointer-events-none absolute top-[236px] left-[720px]" aria-hidden="true">
          <path d="M1 1v11l3-3 2 5 2-1-2-4h4z" fill="#fff" stroke="#333" />
        </svg>
      </main>
    </div>
  );
}
